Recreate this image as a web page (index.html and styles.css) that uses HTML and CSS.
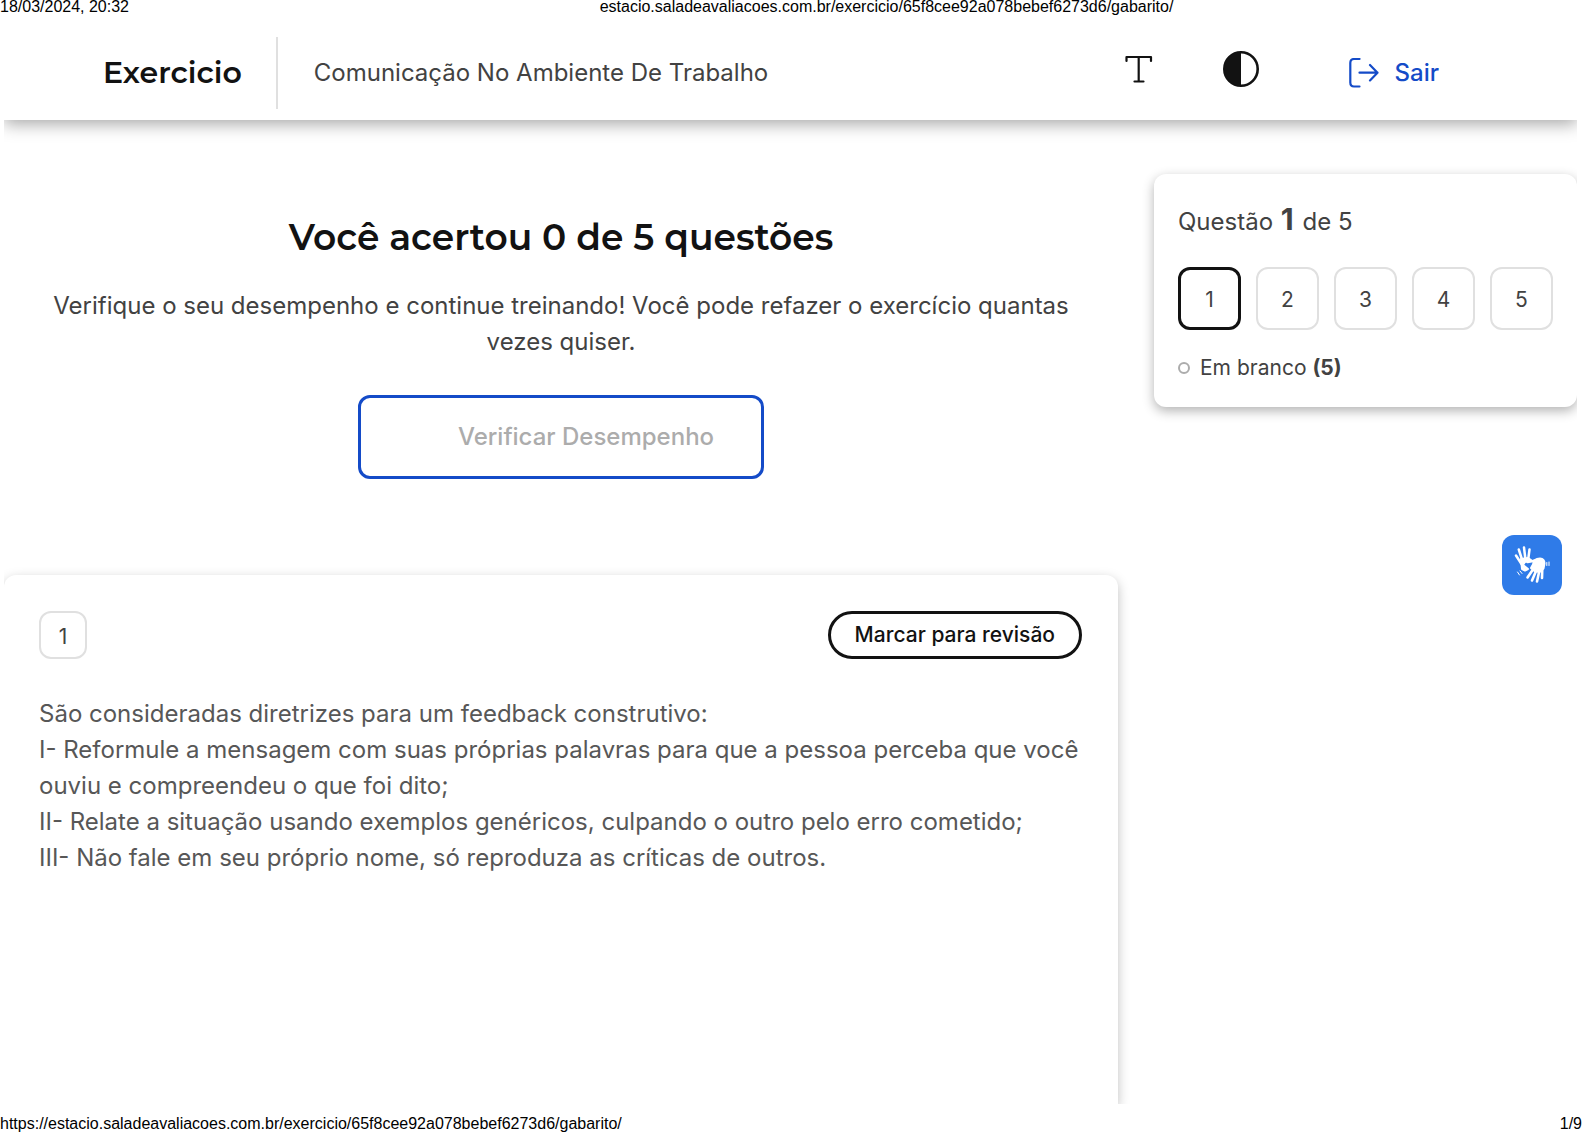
FILE: index.html
```
<!DOCTYPE html>
<html lang="pt-BR">
<head>
    <meta charset="UTF-8">
    <title>Exercicio - Comunicação No Ambiente De Trabalho</title>
    <link rel="stylesheet" href="styles.css">
</head>
<body>
    <div class="print-line print-top">
        <span>18/03/2024, 20:32</span>
        <span class="print-url">estacio.saladeavaliacoes.com.br/exercicio/65f8cee92a078bebef6273d6/gabarito/</span>
    </div>

    <div class="sheet">
        <header class="header">
            <h1 class="brand">Exercicio</h1>
            <p class="subject">Comunicação No Ambiente De Trabalho</p>
            <div class="actions">
                <button class="icon-button" type="button" aria-label="Tamanho do texto">
                    <svg width="28" height="28" viewBox="0 0 28 28" fill="none" stroke="#121212" stroke-width="2.2" stroke-linecap="round" stroke-linejoin="round">
                        <path d="M1.500 6V2h24.500v4M13.700 2v24.500M9.500 26.500h9"/>
                    </svg>
                </button>
                <button class="icon-button" type="button" aria-label="Contraste">
                    <svg width="36" height="36" viewBox="0 0 36 36">
                        <circle cx="18" cy="18" r="16.700" fill="none" stroke="#121212" stroke-width="2.600"/>
                        <path d="M18 1a17 17 0 0 0 0 34z" fill="#121212"/>
                    </svg>
                </button>
                <a class="exit" href="#">
                    <svg width="30" height="30" viewBox="0 0 30 30" fill="none" stroke="#144bc8" stroke-width="2.2" stroke-linecap="round" stroke-linejoin="round">
                        <path d="M10.500 1H5Q1.300 1 1.300 5v19.500q0 4 3.700 4h5.500M10.500 14.700h18M21 7l7.500 7.700L21 22.400"/>
                    </svg>
                    Sair
                </a>
            </div>
        </header>

        <div class="content">
            <main>
                <section class="result">
                    <h2>Você acertou 0 de 5 questões</h2>
                    <p>Verifique o seu desempenho e continue treinando! Você pode refazer o exercício quantas vezes quiser.</p>
                    <button class="check-button" type="button">Verificar Desempenho</button>
                </section>

                <section class="question">
                    <div class="question-top">
                        <span class="question-number">1</span>
                        <button class="review-button" type="button">Marcar para revisão</button>
                    </div>
                    <p>
                        São consideradas diretrizes para um feedback construtivo:<br>
                        I- Reformule a mensagem com suas próprias palavras para que a pessoa perceba que você ouviu e compreendeu o que foi dito;<br>
                        II- Relate a situação usando exemplos genéricos, culpando o outro pelo erro cometido;<br>
                        III- Não fale em seu próprio nome, só reproduza as críticas de outros.
                    </p>
                </section>
            </main>

            <aside class="side">
                <nav class="navigator">
                    <p class="position">Questão <strong>1</strong> de 5</p>
                    <div class="numbers">
                        <button class="active" type="button">1</button>
                        <button type="button">2</button>
                        <button type="button">3</button>
                        <button type="button">4</button>
                        <button type="button">5</button>
                    </div>
                    <p class="legend"><span class="dot"></span><span>Em branco <strong>(5)</strong></span></p>
                </nav>
                <button class="libras" type="button" aria-label="Libras">
                    <svg width="60" height="60" viewBox="0 0 60 60" fill="none" stroke="#fff" stroke-linecap="round" stroke-linejoin="round">
                        <!-- left hand -->
                        <path d="M19 24l7-1 3 2-6 2-2 3 5 4-3 1.500-3-1.500z" fill="#fff" stroke-width="2"/>
                        <path d="M19.500 29l-5.500-8.500M20.500 26l-3.700-11.500M23.500 25l-1.500-12.500M26 26l1.500-11.500" stroke-width="2.500"/>
                        <!-- right hand -->
                        <path d="M32 25.500q3-2 6-2 4.500.5 4.500 5l-1 5-4 3.500-5-1-3.500-3 2-3.500z" fill="#fff" stroke-width="2"/>
                        <path d="M34 25.500l-8.500 1.500M32 33l-6.500 9.500M34.500 35l-4.500 10.500M37.500 35l-2.500 11.500M40.300 33l-.3 10" stroke-width="2.600"/>
                        <path d="M15.500 37l2 3M18 36l2 2.500M44.800 27.500v3M47 27v3.500" stroke-width="1"/>
                    </svg>
                </button>
            </aside>
        </div>
    </div>

    <div class="print-line print-bottom">
        <span>https://estacio.saladeavaliacoes.com.br/exercicio/65f8cee92a078bebef6273d6/gabarito/</span>
        <span>1/9</span>
    </div>
</body>
</html>
```
FILE: styles.css
```
* {
    box-sizing: border-box;
}
body {
    margin: 0;
    min-height: 100vh;
    display: flex;
    flex-direction: column;
    background: #fff;
    color: #424242;
    font-family: Inter, sans-serif;
    font-size: 24px;
    line-height: 36px;
}
h1, h2, p {
    margin: 0;
}
button {
    font: inherit;
    color: inherit;
    background: none;
    border: none;
    padding: 0;
    cursor: pointer;
}
svg {
    display: block;
}

/* browser print header and footer */
.print-line {
    display: flex;
    justify-content: space-between;
    color: #000;
    font-family: "Liberation Sans", Arial, sans-serif;
    font-size: 16px;
    line-height: 16px;
}
.print-top {
    line-height: 14px;
    padding-bottom: 2px;
}
.print-url {
    flex: 1;
    text-align: center;
    padding-left: 62px;
}
.print-bottom {
    padding: 12px 0 1px;
}

.sheet {
    flex: 1;
    margin: 0 5px 0 4px;
    overflow: hidden;
    display: flex;
    flex-direction: column;
}

.header {
    display: flex;
    align-items: center;
    height: 104px;
    padding: 10px 138px 0 99px;
    box-shadow: 0 4px 16px rgba(0, 0, 0, 0.35);
}
.brand {
    color: #121212;
    font-family: Montserrat, Inter, sans-serif;
    font-size: 30px;
    font-weight: 600;
}
.subject {
    margin-left: 34px;
    padding: 18px 36px;
    border-left: 2px solid #e0e0e0;
}
.actions {
    display: flex;
    align-items: center;
    margin-left: auto;
}
.icon-button {
    margin: 0 70px 8px 0;
}
.exit {
    display: flex;
    align-items: center;
    gap: 16px;
    margin-left: 20px;
    color: #144bc8;
    font-weight: 500;
    text-decoration: none;
}

.content {
    flex: 1;
    display: grid;
    grid-template-columns: 1fr 423px;
    gap: 36px;
}
main {
    display: flex;
    flex-direction: column;
}

.result {
    display: flex;
    flex-direction: column;
    align-items: center;
    padding: 93px 36px 96px;
    text-align: center;
}
.result h2 {
    margin-bottom: 27px;
    color: #121212;
    font-family: Montserrat, Inter, sans-serif;
    font-size: 36px;
    font-weight: 600;
    line-height: 48px;
}
.check-button {
    margin-top: 35px;
    padding: 21px 47px 21px 97px;
    border: 3px solid #144bc8;
    border-radius: 12px;
    color: #acacac;
    font-weight: 500;
}

.question {
    flex: 1;
    padding: 36px 36px 36px 35px;
    border-radius: 12px 12px 0 0;
    box-shadow: 0 4px 12px rgba(0, 0, 0, 0.25);
    color: #575757;
}
.question-top {
    display: flex;
    justify-content: space-between;
    margin-bottom: 37px;
}
.question-number {
    width: 48px;
    height: 48px;
    border: 2px solid #e0e0e0;
    border-radius: 12px;
    color: #424242;
    font-size: 21px;
    line-height: 48px;
    text-align: center;
}
.review-button {
    height: 48px;
    padding: 0 24px;
    border: 3px solid #121212;
    border-radius: 24px;
    color: #121212;
    font-size: 21px;
    font-weight: 500;
}

.side {
    display: flex;
    flex-direction: column;
    padding-top: 54px;
}
.navigator {
    padding: 30px 24px 21px;
    border-radius: 12px;
    box-shadow: 0 4px 12px rgba(0, 0, 0, 0.3);
}
.position strong {
    margin: 0 2px 0 1px;
    font-size: 30px;
    line-height: 1;
}
.numbers {
    display: flex;
    justify-content: space-between;
    margin: 27px 0 20px;
}
.numbers button {
    width: 63px;
    height: 63px;
    padding-top: 3px;
    border: 2px solid #e0e0e0;
    border-radius: 12px;
    font-size: 21px;
}
.numbers .active {
    border: 3px solid #121212;
}
.legend {
    display: flex;
    align-items: center;
    gap: 10px;
    font-size: 21px;
}
.dot {
    width: 12px;
    height: 12px;
    border: 2px solid #acacac;
    border-radius: 50%;
}
.libras {
    align-self: flex-end;
    margin: 128px 15px 0 0;
    border-radius: 12px;
    background: #2f7be8;
}
```
